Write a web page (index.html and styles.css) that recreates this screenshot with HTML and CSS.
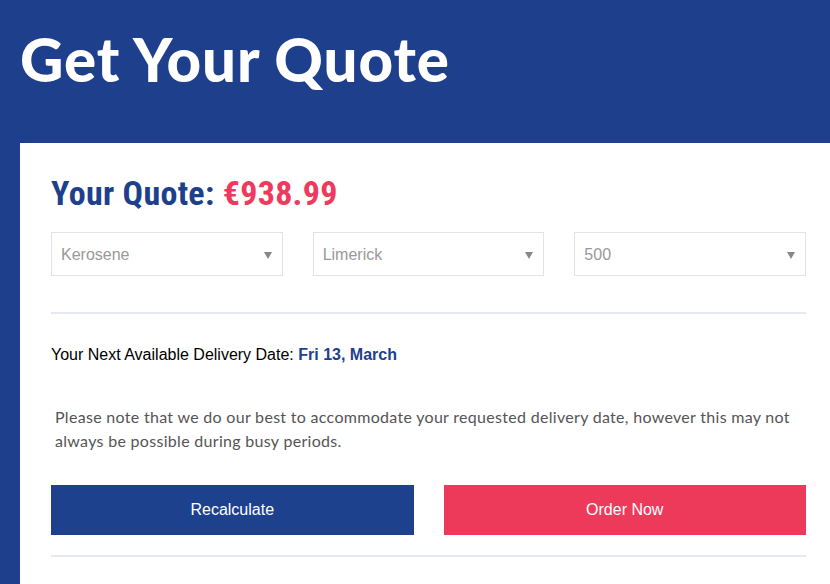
FILE: index.html
```html
<!DOCTYPE html>
<html>
<head>
<meta charset="utf-8">
<link rel="stylesheet" href="styles.css">
</head>
<body>
<div class="page">
  <h1 class="title">Get Your Quote</h1>
  <div class="card">
    <h2 class="quote">Your Quote: <span class="price">€938.99</span></h2>
    <div class="selects">
      <div class="select"><span>Kerosene</span><span class="arrow"></span></div>
      <div class="select"><span>Limerick</span><span class="arrow"></span></div>
      <div class="select"><span>500</span><span class="arrow"></span></div>
    </div>
    <hr class="divider">
    <p class="delivery">Your Next Available Delivery Date: <strong>Fri 13, March</strong></p>
    <p class="note">Please note that we do our best to accommodate your requested delivery date, however this may not always be possible during busy periods.</p>
    <div class="buttons">
      <button class="btn btn-blue">Recalculate</button>
      <button class="btn btn-red">Order Now</button>
    </div>
    <hr class="divider bottom">
  </div>
</div>
</body>
</html>
```
FILE: styles.css
```css
html, body {
  margin: 0;
  padding: 0;
  background: #1e3f8c;
  overflow: hidden;
}
.page {
  height: 584px;
  background: #1e3f8c;
  padding-top: 1px;
  overflow: hidden;
}
.title {
  margin: 22px 0 0 20px;
  font-family: "Lato", sans-serif;
  font-weight: 900;
  font-size: 60px;
  line-height: 72px;
  color: #fff;
  letter-spacing: 0.9px;
}
.card {
  background: #fff;
  margin: 48px 0 0 20px;
  padding: 30px 24px 0 31px;
  height: 440px;
}
.quote {
  margin: 0;
  font-family: "Liberation Sans Narrow", "Roboto Condensed", "Liberation Sans", sans-serif;
  font-weight: bold;
  font-size: 34px;
  line-height: 40px;
  letter-spacing: 0.3px;
  color: #1e3f8c;
}
.price { color: #ef3a5d; }
.selects {
  display: grid;
  grid-template-columns: repeat(3, 1fr);
  column-gap: 30px;
  margin-top: 19px;
}
.select {
  height: 44px;
  box-sizing: border-box;
  border: 1px solid #e3e3e3;
  display: flex;
  align-items: center;
  justify-content: space-between;
  padding: 2px 10px 0 9px;
  font-family: "Liberation Sans", Arial, sans-serif;
  font-size: 16px;
  color: #999;
}
.arrow {
  width: 0;
  height: 0;
  border-left: 4px solid transparent;
  border-right: 4px solid transparent;
  border-top: 7px solid #888;
}
.divider {
  margin: 36px 0 0 0;
  border: 0;
  height: 2px;
  background: #e6e8f3;
}
.delivery {
  margin: 31px 0 0 0;
  font-family: "Liberation Sans", Arial, sans-serif;
  font-size: 16px;
  line-height: 20px;
  color: #000;
}
.delivery strong { color: #1e3f8c; }
.note {
  margin: 40px 0 0 4px;
  font-family: "Lato", sans-serif;
  font-size: 16px;
  line-height: 24px;
  letter-spacing: 0.3px;
  color: #555;
}
.buttons {
  display: grid;
  grid-template-columns: 1fr 1fr;
  column-gap: 30px;
  margin-top: 32px;
}
.btn {
  height: 50px;
  border: 0;
  font-family: "Liberation Sans Narrow", "Liberation Sans", Arial, sans-serif;
  font-size: 16px;
  color: #fff;
  cursor: pointer;
}
.btn-blue { background: #1e418e; }
.btn-red { background: #ee3a5a; }
.divider.bottom { margin-top: 20px; }
```
